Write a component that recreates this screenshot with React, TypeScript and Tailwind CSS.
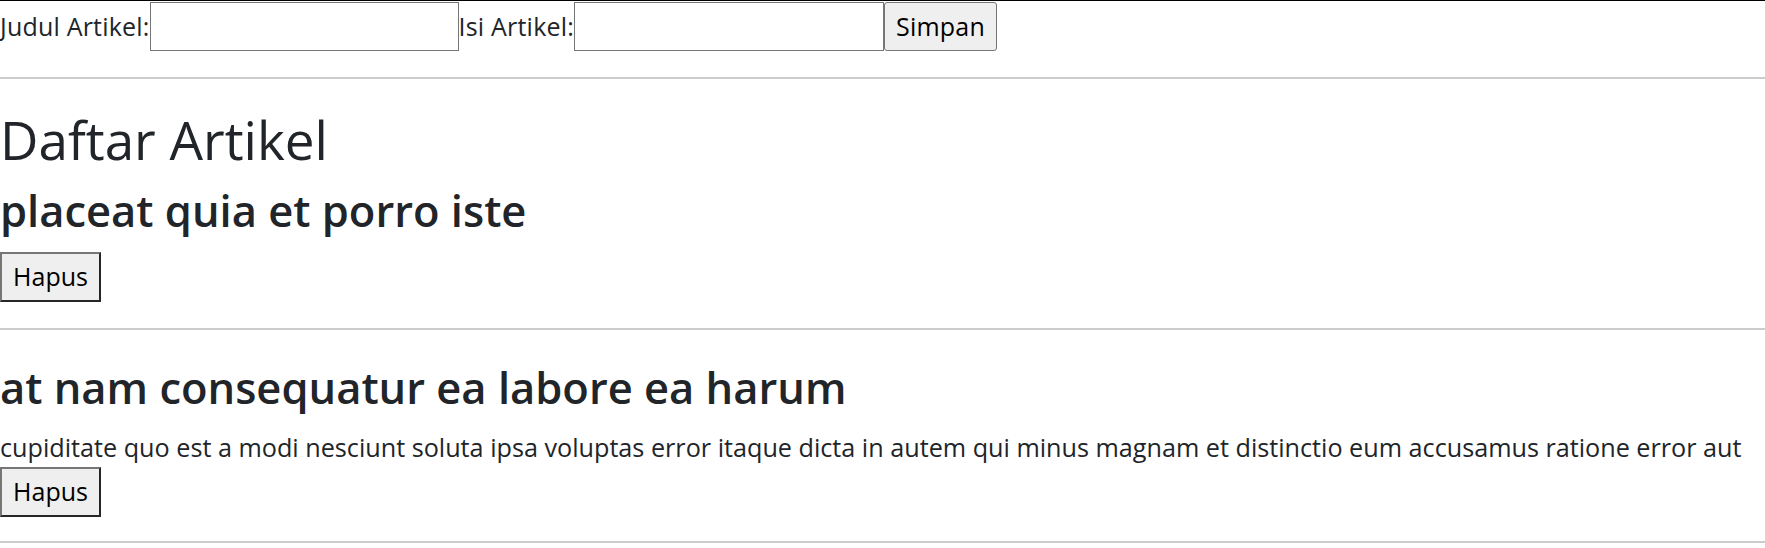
import { useState } from "react";

type Artikel = {
    id: number;
    title: string;
    body: string;
};

const initialArtikel: Artikel[] = [
    { id: 1, title: "placeat quia et porro iste", body: "" },
    {
        id: 2,
        title: "at nam consequatur ea labore ea harum",
        body: "cupiditate quo est a modi nesciunt soluta ipsa voluptas error itaque dicta in autem qui minus magnam et distinctio eum accusamus ratione error aut",
    },
];

function App() {
    const [artikel, setArtikel] = useState<Artikel[]>(initialArtikel);
    const [judul, setJudul] = useState("");
    const [isi, setIsi] = useState("");

    const simpan = (e: React.FormEvent) => {
        e.preventDefault();
        if (!judul) return;
        setArtikel([...artikel, { id: Date.now(), title: judul, body: isi }]);
        setJudul("");
        setIsi("");
    };

    const hapus = (id: number) => setArtikel(artikel.filter((a) => a.id !== id));

    return (
        <div className="min-h-screen border-t border-black bg-white font-['Open_Sans',sans-serif] text-[#212529]">
            <form onSubmit={simpan} className="flex items-center pt-px text-[25px] tracking-[0.2px]">
                <label htmlFor="judul">Judul Artikel:</label>
                <input
                    id="judul"
                    value={judul}
                    onChange={(e) => setJudul(e.target.value)}
                    className="h-[49px] w-[309px] border border-[#767676] bg-white px-1 outline-none"
                />
                <label htmlFor="isi">Isi Artikel:</label>
                <input
                    id="isi"
                    value={isi}
                    onChange={(e) => setIsi(e.target.value)}
                    className="h-[49px] w-[310px] border border-[#767676] bg-white px-1 outline-none"
                />
                <button
                    type="submit"
                    className="h-[49px] w-[113px] rounded-[3px] border border-[#767676] bg-[#efefef] text-black"
                >
                    Simpan
                </button>
            </form>
            <hr className="mt-[26px] border-t-2 border-[#cccccc]" />

            <h1 className="mt-[30px] text-[53px] leading-[62px] font-medium">Daftar Artikel</h1>

            {artikel.map((a, i) => (
                <div key={a.id}>
                    <h2 className={`${i === 0 ? "mt-[15px]" : "mt-[33px]"} text-[43.5px] leading-[50px] font-semibold`}>
                        {a.title}
                    </h2>
                    {a.body && <p className="mt-[19px] text-[25.2px] leading-[30px]">{a.body}</p>}
                    <button
                        onClick={() => hapus(a.id)}
                        className={`${a.body ? "mt-[5px]" : "mt-[16px]"} h-[50px] w-[101px] border-2 border-t-[#767676] border-l-[#767676] border-r-[#262626] border-b-[#262626] bg-[#efefef] text-[25px] text-black`}
                    >
                        Hapus
                    </button>
                    <hr className={`${a.body ? "mt-[24px]" : "mt-[26px]"} border-t-2 border-[#cccccc]`} />
                </div>
            ))}
        </div>
    );
}

export default App;
